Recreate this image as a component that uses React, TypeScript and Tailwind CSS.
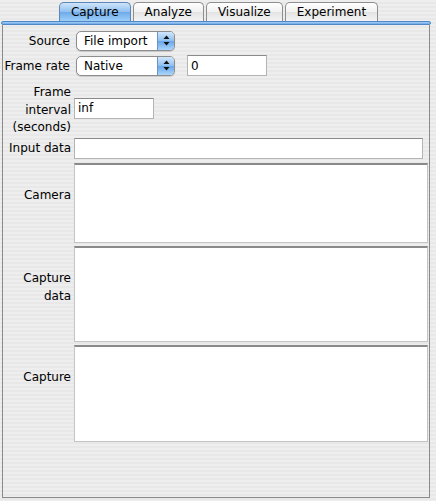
const font = { fontFamily: '"DejaVu Sans", "Liberation Sans", sans-serif' }

const Tab = ({ label, active }: { label: string; active?: boolean }) => (
  <div
    className={
      'h-[19px] px-[11px] flex items-center rounded-t-[5px] border border-b-0 text-[12px] leading-none text-black ' +
      (active
        ? 'border-[#5a86b8] bg-[linear-gradient(to_bottom,#cfe4fa,#8fc0f0_50%,#6fa9e8_51%,#9bd0fb)]'
        : 'border-[#8e8e8e] bg-[linear-gradient(to_bottom,#ffffff,#f1f1f1_50%,#e3e3e3_51%,#f4f4f4)]')
    }
  >
    {label}
  </div>
)

const UpDown = () => (
  <svg width="7" height="11" viewBox="0 0 7 11">
    <path d="M3.5 0.5 L6.5 4 L0.5 4 Z" fill="#111" />
    <path d="M3.5 10.5 L6.5 7 L0.5 7 Z" fill="#111" />
  </svg>
)

const Popup = ({ value }: { value: string }) => (
  <div className="ml-[2px] h-[20px] w-[99px] flex rounded-[5px] border border-[#8d8d8d] bg-white shadow-[0_1px_1px_rgba(0,0,0,0.15)] overflow-hidden">
    <div className="flex-1 pl-[7px] flex items-center text-[12px] leading-none text-black">
      {value}
    </div>
    <div className="w-[17px] flex items-center justify-center border-l border-[#6d93c4] bg-[linear-gradient(to_bottom,#d2e6fb,#8dbef0_50%,#6aa6e7_51%,#a9d5fb)]">
      <UpDown />
    </div>
  </div>
)

const Field = ({ value, className }: { value?: string; className: string }) => (
  <div
    className={
      'h-[21px] bg-white border border-[#b4b4b4] border-t-[#8a8a8a] pl-[3px] flex items-center text-[12px] leading-none text-black ' +
      className
    }
  >
    {value}
  </div>
)

const Area = ({ className }: { className: string }) => (
  <div
    className={
      'flex-1 mr-[1px] bg-white border border-[#c4c4c4] border-t-[#8a8a8a] border-t-2 ' +
      className
    }
  />
)

export default function App() {
  return (
    <div
      style={font}
      className="w-[436px] h-[501px] overflow-hidden bg-[repeating-linear-gradient(to_bottom,#eeeeee_0px,#eeeeee_2px,#e8e8e8_2px,#e8e8e8_4px)] pt-[2px]"
    >
      <div className="flex justify-center gap-[2px] pl-[1px]">
        <Tab label="Capture" active />
        <Tab label="Analyze" />
        <Tab label="Visualize" />
        <Tab label="Experiment" />
      </div>
      <div className="ml-[1px] w-[430px] h-[4px] rounded-[2px] border border-[#4f87c7] bg-[linear-gradient(to_bottom,#a9d0f5,#6ba8e8)]" />
      <div className="ml-[2px] w-[428px] h-[473px] border border-t-0 border-[#8a8a8a] flex flex-col text-[12px] text-black">
        <div className="flex items-center mt-[5px] h-[21px]">
          <div className="w-[68px] text-right pr-[1px]">Source</div>
          <div className="ml-[3px]">
            <Popup value="File import" />
          </div>
        </div>
        <div className="flex items-center mt-[4px] h-[21px]">
          <div className="w-[68px] text-right pr-[1px]">Frame rate</div>
          <div className="ml-[3px] flex items-center gap-[12px]">
            <Popup value="Native" />
            <Field value="0" className="w-[80px]" />
          </div>
        </div>
        <div className="flex items-center mt-[8px]">
          <div className="w-[68px] text-right leading-[17.5px]">
            Frame
            <br />
            interval
            <br />
            (seconds)
          </div>
          <Field value="inf" className="ml-[3px] w-[80px] -translate-y-[2px]" />
        </div>
        <div className="flex items-center mt-[1px]">
          <div className="w-[68px] text-right">Input data</div>
          <Field className="ml-[3px] w-[349px]" />
        </div>
        <div className="flex mt-[4px] h-[80px]">
          <div className="w-[68px] text-right pt-[23px]">Camera</div>
          <Area className="ml-[3px]" />
        </div>
        <div className="flex mt-[3px] h-[96px]">
          <div className="w-[68px] text-right pt-[23px] leading-[18px]">
            Capture
            <br />
            data
          </div>
          <Area className="ml-[3px]" />
        </div>
        <div className="flex mt-[3px] h-[97px]">
          <div className="w-[68px] text-right pt-[23px]">Capture</div>
          <Area className="ml-[3px]" />
        </div>
      </div>
    </div>
  )
}
